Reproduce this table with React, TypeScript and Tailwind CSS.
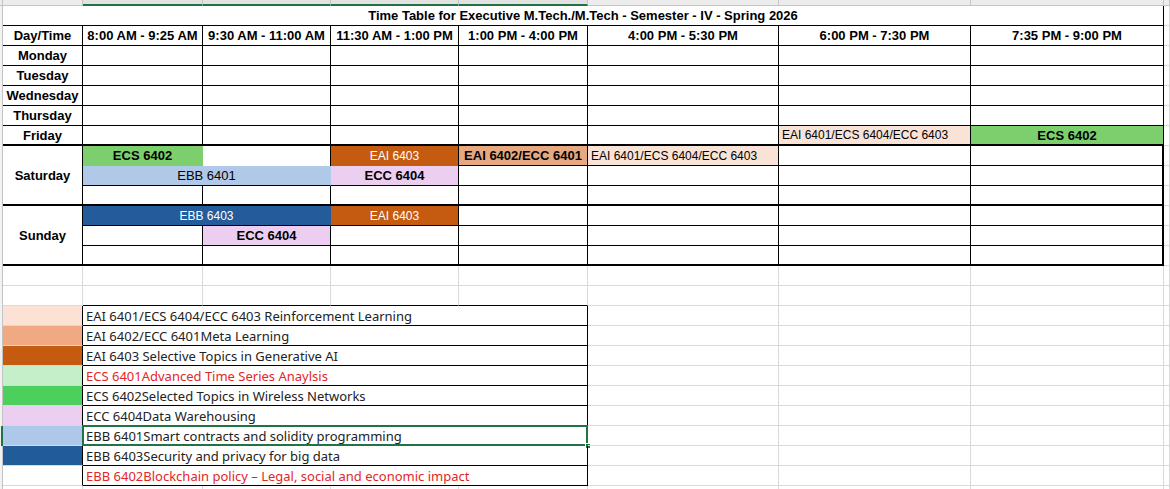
import clsx from "clsx";
import type { ReactNode } from "react";

/** One spreadsheet cell – flex so text can be centred or left aligned */
function Cell({ className, children }: { className?: string; children?: ReactNode }) {
    return (
        <div className={clsx("relative flex items-center overflow-hidden whitespace-nowrap leading-none", className)}>
            {children}
        </div>
    );
}

const grid = "border-r border-b border-[#dadada]";
const line = "border-r border-b border-black";
const head = "bg-[#ececec] border-r border-b border-[#c4c4c4]";
const rowHead = "bg-[#f2f2f2] border-r border-[#c4c4c4]";
const bold = "justify-center font-bold text-[13px]";

const legend = [
    { swatch: "bg-[#fbe2d5]", text: "EAI 6401/ECS 6404/ECC 6403 Reinforcement Learning" },
    { swatch: "bg-[#f1a983]", text: "EAI 6402/ECC 6401Meta Learning" },
    { swatch: "bg-[#c55a11]", text: "EAI 6403 Selective Topics in Generative AI" },
    { swatch: "bg-[#c5efc8]", text: "ECS 6401Advanced Time Series Anaylsis", red: true },
    { swatch: "bg-[#4ccf5c]", text: "ECS 6402Selected Topics in Wireless Networks" },
    { swatch: "bg-[#eccff0]", text: "ECC 6404Data Warehousing" },
    { swatch: "bg-[#adc8e8]", text: "EBB 6401Smart contracts and solidity programming", selected: true },
    { swatch: "bg-[#215c98]", text: "EBB 6403Security and privacy for big data" },
    { swatch: "bg-white", text: "EBB 6402Blockchain policy – Legal, social and economic impact", red: true },
];

const times = [
    "8:00 AM - 9:25 AM",
    "9:30 AM - 11:00 AM",
    "11:30 AM - 1:00 PM",
    "1:00 PM - 4:00 PM",
    "4:00 PM - 5:30 PM",
    "6:00 PM - 7:30 PM",
    "7:35 PM - 9:00 PM",
];

export default function App() {
    return (
        <div className="h-[489px] w-[1170px] overflow-hidden bg-white font-['Liberation_Sans',Arial,sans-serif] text-black">
            <div className="grid grid-cols-[3px_80px_120px_128px_128px_129px_191px_192px_193px_6px] grid-rows-[6px_repeat(24,20px)_3px]">
                {/* column header strip */}
                <Cell className={head} />
                <Cell className={head} />
                <Cell className="bg-[#e2e2e2] border-r border-[#c4c4c4] border-b-2 border-b-[#217346]" />
                <Cell className="bg-[#e2e2e2] border-r border-[#c4c4c4] border-b-2 border-b-[#217346]" />
                <Cell className="bg-[#e2e2e2] border-r border-[#c4c4c4] border-b-2 border-b-[#217346]" />
                <Cell className="bg-[#e2e2e2] border-r border-[#c4c4c4] border-b-2 border-b-[#217346]" />
                <Cell className={head} />
                <Cell className={head} />
                <Cell className={head} />
                <Cell className={head} />

                {/* title */}
                <Cell className={rowHead} />
                <Cell className={clsx("col-span-8", bold, line)}>
                    Time Table for Executive M.Tech./M.Tech - Semester - IV - Spring 2026
                </Cell>
                <Cell className={grid} />

                {/* Day/Time header */}
                <Cell className={rowHead} />
                <Cell className={clsx(bold, line)}>Day/Time</Cell>
                {times.map((t) => (
                    <Cell key={t} className={clsx(bold, line)}>
                        {t}
                    </Cell>
                ))}
                <Cell className={grid} />

                {/* Monday – Thursday */}
                {["Monday", "Tuesday", "Wednesday", "Thursday"].map((day) => (
                    <div key={day} className="contents">
                        <Cell className={rowHead} />
                        <Cell className={clsx(bold, line)}>{day}</Cell>
                        {times.map((t) => (
                            <Cell key={t} className={line} />
                        ))}
                        <Cell className={grid} />
                    </div>
                ))}

                {/* Friday */}
                <Cell className={rowHead} />
                <Cell className={clsx(bold, "border-r border-black border-b-2")}>Friday</Cell>
                <Cell className="border-r border-black border-b-2" />
                <Cell className="border-r border-black border-b-2" />
                <Cell className="border-r border-black border-b-2" />
                <Cell className="border-r border-black border-b-2" />
                <Cell className="border-r border-black border-b-2" />
                <Cell className="bg-[#f9e3d7] pl-[3px] text-[12px] border-r border-black border-b-2">
                    EAI 6401/ECS 6404/ECC 6403
                </Cell>
                <Cell className={clsx(bold, "bg-[#7ccf6c] border-r border-black border-b-2")}>ECS 6402</Cell>
                <Cell className={grid} />

                {/* Saturday row 1 */}
                <Cell className={rowHead} />
                <Cell className={clsx(bold, "row-span-3 border-r border-black border-b-2")}>Saturday</Cell>
                <Cell className={clsx(bold, "bg-[#7ccf6c] border-r border-b border-[#7ccf6c]")}>ECS 6402</Cell>
                <Cell className="border-r border-black" />
                <Cell className="bg-[#c55a11] justify-center text-[12px] text-white border-r border-black">
                    EAI 6403
                </Cell>
                <Cell className={clsx(bold, "bg-[#e6a880] border-r border-b border-black")}>EAI 6402/ECC 6401</Cell>
                <Cell className="bg-[#f9e3d7] pl-[3px] text-[12px] border-r border-b border-black">
                    EAI 6401/ECS 6404/ECC 6403
                </Cell>
                <Cell className={line} />
                <Cell className="border-r-2 border-b border-black" />
                <Cell className={grid} />

                {/* Saturday row 2 */}
                <Cell className={rowHead} />
                <Cell className="col-span-2 justify-center text-[13px] bg-[#b1c9e8] border-r border-b border-r-[#b1c9e8] border-b-black">
                    EBB 6401
                </Cell>
                <Cell className={clsx(bold, "bg-[#eccff0] border-r border-b border-black")}>ECC 6404</Cell>
                <Cell className={line} />
                <Cell className={line} />
                <Cell className={line} />
                <Cell className="border-r-2 border-b border-black" />
                <Cell className={grid} />

                {/* Saturday row 3 */}
                <Cell className={rowHead} />
                <Cell className="border-r border-b-2 border-black" />
                <Cell className="border-r border-b-2 border-black" />
                <Cell className="border-r border-b-2 border-black" />
                <Cell className="border-r border-b-2 border-black" />
                <Cell className="border-r border-b-2 border-black" />
                <Cell className="border-r border-b-2 border-black" />
                <Cell className="border-r-2 border-b-2 border-black" />
                <Cell className={grid} />

                {/* Sunday row 1 */}
                <Cell className={rowHead} />
                <Cell className={clsx(bold, "row-span-3 border-r border-black border-b-2")}>Sunday</Cell>
                <Cell className="col-span-2 justify-center text-[12px] text-white bg-[#245b9a] border-r border-b border-r-[#245b9a] border-b-black">
                    EBB 6403
                </Cell>
                <Cell className="bg-[#c55a11] justify-center text-[12px] text-white border-r border-b border-black">
                    EAI 6403
                </Cell>
                <Cell className={line} />
                <Cell className={line} />
                <Cell className={line} />
                <Cell className="border-r-2 border-b border-black" />
                <Cell className={grid} />

                {/* Sunday row 2 */}
                <Cell className={rowHead} />
                <Cell className={line} />
                <Cell className={clsx(bold, "bg-[#eccff0] border-r border-b border-black")}>ECC 6404</Cell>
                <Cell className={line} />
                <Cell className={line} />
                <Cell className={line} />
                <Cell className={line} />
                <Cell className="border-r-2 border-b border-black" />
                <Cell className={grid} />

                {/* Sunday row 3 */}
                <Cell className={rowHead} />
                <Cell className="border-r border-b-2 border-black" />
                <Cell className="border-r border-b-2 border-black" />
                <Cell className="border-r border-b-2 border-black" />
                <Cell className="border-r border-b-2 border-black" />
                <Cell className="border-r border-b-2 border-black" />
                <Cell className="border-r border-b-2 border-black" />
                <Cell className="border-r-2 border-b-2 border-black" />
                <Cell className={grid} />

                {/* two empty rows */}
                <Cell className={rowHead} />
                {Array.from({ length: 9 }).map((_, i) => (
                    <Cell key={i} className={grid} />
                ))}
                <Cell className={rowHead} />
                <Cell className={grid} />
                <Cell className="border-r border-b border-r-[#dadada] border-b-black" />
                <Cell className="border-r border-b border-r-[#dadada] border-b-black" />
                <Cell className="border-r border-b border-r-[#dadada] border-b-black" />
                <Cell className="border-b border-black border-r border-r-[#dadada]" />
                <Cell className={grid} />
                <Cell className={grid} />
                <Cell className={grid} />
                <Cell className={grid} />

                {/* legend */}
                {legend.map((row) => (
                    <div key={row.text} className="contents">
                        <Cell
                            className={clsx(
                                rowHead,
                                row.selected && "border-r-2 border-r-[#217346]"
                            )}
                        />
                        <Cell className={clsx(row.swatch, "border-r border-b border-r-black border-b-[#d9d9d9]")} />
                        <Cell
                            className={clsx(
                                "col-span-4 pl-[3px] pt-px font-['Noto_Sans',sans-serif] text-[13px] border-r border-b border-black overflow-visible",
                                row.red ? "text-[#e32626]" : "text-[#222]"
                            )}
                        >
                            {row.text}
                            {row.selected && (
                                <>
                                    <span className="absolute -left-px -top-px -right-px -bottom-px border-2 border-[#217346]" />
                                    <span className="absolute -right-[4px] -bottom-[4px] h-[6px] w-[6px] bg-[#217346] border border-white" />
                                </>
                            )}
                        </Cell>
                        <Cell className={grid} />
                        <Cell className={grid} />
                        <Cell className={grid} />
                        <Cell className={grid} />
                    </div>
                ))}

                {/* partial last row */}
                <Cell className={rowHead} />
                {Array.from({ length: 9 }).map((_, i) => (
                    <Cell key={i} className="border-r border-[#dadada]" />
                ))}
            </div>
        </div>
    );
}
